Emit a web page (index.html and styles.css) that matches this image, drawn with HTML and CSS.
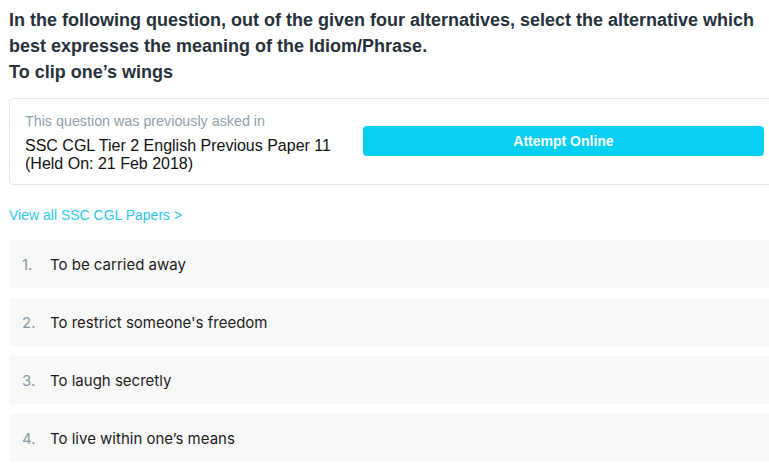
FILE: index.html
```html
<!DOCTYPE html>
<html lang="en">
<head>
  <meta charset="UTF-8">
  <meta name="viewport" content="width=device-width, initial-scale=1">
  <title>Idiom Question</title>
  <link rel="stylesheet" href="styles.css">
</head>
<body>
  <div class="question">
    <p class="question-text">In the following question, out of the given four alternatives, select the alternative which best expresses the meaning of the Idiom/Phrase.<br>To clip one’s wings</p>

    <div class="asked-card">
      <div class="asked-info">
        <p class="asked-label">This question was previously asked in</p>
        <p class="asked-paper">SSC CGL Tier 2 English Previous Paper 11 (Held On: 21 Feb 2018)</p>
      </div>
      <button class="attempt-btn">Attempt Online</button>
    </div>

    <a class="papers-link" href="#">View all SSC CGL Papers &gt;</a>

    <ol class="options">
      <li class="option"><span class="num">1.</span>To be carried away</li>
      <li class="option"><span class="num">2.</span>To restrict someone's freedom</li>
      <li class="option"><span class="num">3.</span>To laugh secretly</li>
      <li class="option"><span class="num">4.</span>To live within one’s means</li>
    </ol>
  </div>
</body>
</html>
```

FILE: styles.css
```css
html {
  overflow: hidden;
}
body {
  margin: 0;
  padding: 0 0 0 9px;
  font-family: "Liberation Sans", Arial, sans-serif;
  background: #fff;
}
.question {
  width: 771px;
}
.question-text {
  margin: 0;
  padding-top: 7px;
  font-size: 18px;
  font-weight: bold;
  line-height: 26px;
  color: #27313b;
}

.asked-card {
  margin-top: 13px;
  display: grid;
  grid-template-columns: 1fr 401px;
  gap: 10px;
  padding: 14px 15px 11px;
  border: 1px solid #e5e8eb;
  border-radius: 4px;
}
.asked-label {
  margin: 0 0 8px;
  font-size: 14.3px;
  color: #8fa1ad;
}
.asked-paper {
  margin: 0;
  font-size: 16px;
  line-height: 18px;
  color: #111;
}
.attempt-btn {
  height: 30px;
  margin-top: 13px;
  border: none;
  border-radius: 4px;
  background: #05d0f2;
  color: #fff;
  font-family: inherit;
  font-size: 14px;
  font-weight: bold;
}

.papers-link {
  display: block;
  margin-top: 22px;
  font-size: 14px;
  color: #2ec7ee;
  text-decoration: none;
}

.options {
  list-style: none;
  margin: 17px 0 0;
  padding: 0;
  display: flex;
  flex-direction: column;
  gap: 10px;
}
.option {
  height: 48px;
  display: flex;
  align-items: center;
  padding-left: 13px;
  background: #f8f8f8;
  border-radius: 4px;
  font-family: Inter, sans-serif;
  font-size: 15px;
  color: #1c1c1c;
}
.num {
  width: 28px;
  color: #8d979f;
}
```
